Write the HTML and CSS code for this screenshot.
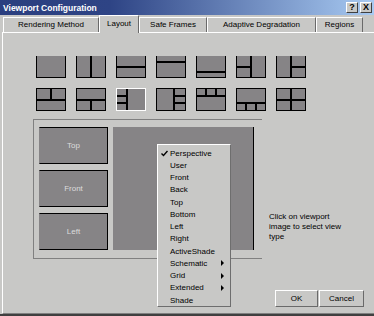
FILE: index.html
```html
<!DOCTYPE html>
<html lang="en">
<head>
    <meta charset="UTF-8">
    <title>Viewport Configuration</title>
    <link rel="stylesheet" href="styles.css">
</head>
<body>
<div class="dialog">
    <!-- Title bar -->
    <div class="titlebar">
        <span class="title">Viewport Configuration</span>
        <div class="caption-btns">
            <span class="cbtn">?</span>
            <span class="cbtn">X</span>
        </div>
    </div>

    <!-- Tabs -->
    <div class="tabs">
        <div class="tab tab-render">Rendering Method</div>
        <div class="tab tab-layout active">Layout</div>
        <div class="tab tab-safe">Safe Frames</div>
        <div class="tab tab-adaptive">Adaptive Degradation</div>
        <div class="tab tab-regions">Regions</div>
    </div>

    <div class="panel">
        <!-- Layout choices -->
        <div class="layouts">
            <div class="thumb top-row l-single"><i></i></div>
            <div class="thumb top-row l-cols2"><i></i><i></i></div>
            <div class="thumb top-row l-rows2"><i></i><i></i></div>
            <div class="thumb top-row l-top-small"><i></i><i></i></div>
            <div class="thumb top-row l-bottom-small"><i></i><i></i></div>
            <div class="thumb top-row l-left-split"><i></i><i class="span-rows"></i><i></i></div>
            <div class="thumb top-row l-right-split"><i class="span-rows"></i><i></i><i></i></div>

            <div class="thumb l-two-over-one"><i></i><i></i><i class="span-cols"></i></div>
            <div class="thumb l-one-over-two"><i class="span-cols"></i><i></i><i></i></div>
            <div class="thumb selected l-three-left"><i></i><i class="span-rows3"></i><i></i><i></i></div>
            <div class="thumb l-three-right"><i class="span-rows3"></i><i></i><i></i><i></i></div>
            <div class="thumb l-three-top"><i></i><i></i><i></i><i class="span-cols3"></i></div>
            <div class="thumb l-three-bottom"><i class="span-cols3"></i><i></i><i></i><i></i></div>
            <div class="thumb l-quad"><i></i><i></i><i></i><i></i></div>
        </div>

        <div class="main">
            <div class="frame">
                <div class="small-views">
                    <div class="view">Top</div>
                    <div class="view">Front</div>
                    <div class="view">Left</div>
                </div>
                <div class="big-view"></div>
            </div>
            <div class="side">
                <p class="hint">Click on viewport<br>image to select view<br>type</p>
                <div class="buttons">
                    <button class="btn btn-ok">OK</button>
                    <button class="btn btn-cancel">Cancel</button>
                </div>
            </div>
        </div>
    </div>

    <!-- Viewport type popup -->
    <ul class="menu">
        <li class="checked">
            <svg class="check" width="7" height="7" viewBox="0 0 7 7"><path d="M0.5 3.5 L2.5 5.5 L6.5 1" fill="none" stroke="#000" stroke-width="1.4"/></svg>
            Perspective
        </li>
        <li>User</li>
        <li>Front</li>
        <li>Back</li>
        <li>Top</li>
        <li>Bottom</li>
        <li>Left</li>
        <li>Right</li>
        <li>ActiveShade</li>
        <li class="sub">Schematic<span class="arrow"></span></li>
        <li class="sub">Grid<span class="arrow"></span></li>
        <li class="sub">Extended<span class="arrow"></span></li>
        <li>Shade</li>
    </ul>
</div>
</body>
</html>
```

FILE: styles.css
```css
/* Base */
body {
    margin: 0;
    width: 374px;
    height: 316px;
    overflow: hidden;
    background-color: #c8c8c6;
    font-family: "Liberation Sans", Arial, sans-serif;
    font-size: 8px;
    color: #000;
}

.dialog {
    position: relative;
    height: 314px;
    border-bottom: 2px solid #404040;
}

/* Title bar */
.titlebar {
    height: 15px;
    display: flex;
    align-items: center;
    justify-content: space-between;
    padding: 0 2px 0 3px;
    background: linear-gradient(90deg, #2b3f7f 0px, #2e4485 110px, #a8caf2 374px);
}

.title {
    color: #fff;
    font-weight: bold;
    font-size: 8.5px;
}

.caption-btns {
    display: flex;
    gap: 2px;
}

.cbtn {
    box-sizing: border-box;
    width: 12px;
    height: 11px;
    background-color: #c8c8c6;
    border-top: 1px solid #fff;
    border-left: 1px solid #fff;
    border-right: 1px solid #404040;
    border-bottom: 1px solid #404040;
    font-weight: bold;
    font-size: 9px;
    line-height: 9px;
    text-align: center;
}

/* Tabs */
.tabs {
    height: 17px;
    display: flex;
    align-items: flex-end;
    padding-left: 3px;
}

.tab {
    box-sizing: border-box;
    height: 15px;
    line-height: 13px;
    text-align: center;
    border-top: 1px solid #fff;
    border-left: 1px solid #fff;
    border-right: 1px solid #6a6a6a;
    background-color: #c8c8c6;
}

.tab.active {
    position: relative;
    z-index: 1;
    height: 18px;
    margin-bottom: -1px;
    line-height: 15px;
}

.tab-render { width: 96px; }
.tab-layout { width: 40px; }
.tab-safe { width: 68px; }
.tab-adaptive { width: 109px; }
.tab-regions { width: 47px; }

/* Tab panel */
.panel {
    box-sizing: border-box;
    height: 282px;
    margin-left: 2px;
    border-top: 1px solid #fff;
    border-left: 1px solid #fff;
    border-bottom: 1px solid #808080;
}

/* Layout thumbnails */
.layouts {
    display: grid;
    grid-template-columns: repeat(7, 30px);
    grid-template-rows: 22px 23px;
    gap: 10px;
    margin: 23px 0 0 33px;
}

.thumb {
    box-sizing: border-box;
    display: grid;
    gap: 2px;
    background-color: #000;
    border: 1px solid #000;
}

.thumb.top-row {
    border-top: none;
}

.thumb.selected {
    border-color: #fff;
}

.thumb i {
    background-color: #868486;
}

.l-cols2 { grid-template-columns: 1fr 1fr; }
.l-rows2 { grid-template-rows: 1fr 1fr; }
.l-top-small { grid-template-rows: 5px 1fr; }
.l-bottom-small { grid-template-rows: 1fr 4px; }
.l-left-split { grid-template-columns: 1fr 1fr; grid-template-rows: 1fr 1fr; }
.l-left-split .span-rows { grid-column: 2; grid-row: 1 / 3; }
.l-right-split { grid-template-columns: 1fr 1fr; grid-template-rows: 1fr 1fr; }
.l-right-split .span-rows { grid-row: 1 / 3; }
.l-two-over-one,
.l-one-over-two,
.l-quad { grid-template-columns: 1fr 1fr; grid-template-rows: 1fr 1fr; }
.span-cols { grid-column: 1 / 3; }
.l-three-left { grid-template-columns: 9px 1fr; grid-template-rows: 1fr 1fr 1fr; }
.l-three-left .span-rows3 { grid-column: 2; grid-row: 1 / 4; }
.l-three-right { grid-template-columns: 1fr 10px; grid-template-rows: 1fr 1fr 1fr; }
.l-three-right .span-rows3 { grid-row: 1 / 4; }
.l-three-top { grid-template-columns: 1fr 1fr 1fr; grid-template-rows: 6px 1fr; }
.l-three-bottom { grid-template-columns: 1fr 1fr 1fr; grid-template-rows: 1fr 6px; }
.span-cols3 { grid-column: 1 / 4; }

/* Viewport preview */
.main {
    display: flex;
    margin: 8px 0 0 30px;
}

.frame {
    box-sizing: border-box;
    width: 229px;
    height: 140px;
    display: flex;
    gap: 5px;
    padding: 7px 0 0 5px;
    border-top: 1px solid #808080;
    border-left: 1px solid #808080;
    border-bottom: 1px solid #808080;
}

.small-views {
    display: flex;
    flex-direction: column;
    gap: 6px;
}

.view {
    box-sizing: border-box;
    width: 69px;
    height: 37px;
    background-color: #868486;
    border: 1px solid #000;
    border-left-color: #868486;
    color: #dcdcdc;
    display: flex;
    align-items: center;
    justify-content: center;
}

.big-view {
    box-sizing: border-box;
    width: 141px;
    height: 123px;
    background-color: #868486;
    border-right: 1px solid #000;
}

.side {
    display: flex;
    flex-direction: column;
    padding: 93px 0 0 7px;
}

.hint {
    margin: 0;
    line-height: 10px;
}

.buttons {
    display: flex;
    gap: 1px;
    margin: 48px 0 0 6px;
}

.btn {
    box-sizing: border-box;
    height: 17px;
    padding: 0;
    font: inherit;
    background-color: #c8c8c6;
    border-top: 1px solid #fff;
    border-left: 1px solid #fff;
    border-right: 1px solid #6a6a6a;
    border-bottom: 1px solid #6a6a6a;
}

.btn-ok { width: 43px; }
.btn-cancel { width: 45px; }

/* Popup menu */
.menu {
    position: absolute;
    left: 157px;
    top: 144px;
    box-sizing: border-box;
    width: 74px;
    height: 163px;
    margin: 0;
    padding: 2px 0 0 0;
    list-style: none;
    background-color: #c8c8c6;
    border-top: 1px solid #fff;
    border-left: 1px solid #fff;
    border-right: 1px solid #6e6e6e;
    border-bottom: 1px solid #6e6e6e;
}

.menu li {
    position: relative;
    display: flex;
    align-items: center;
    height: 12.25px;
    padding: 0 6px 0 12px;
}

.menu .check {
    position: absolute;
    left: 3px;
    top: 3px;
}

.menu .arrow {
    margin-left: auto;
    width: 0;
    height: 0;
    border-left: 3px solid #000;
    border-top: 3px solid transparent;
    border-bottom: 3px solid transparent;
}
```
